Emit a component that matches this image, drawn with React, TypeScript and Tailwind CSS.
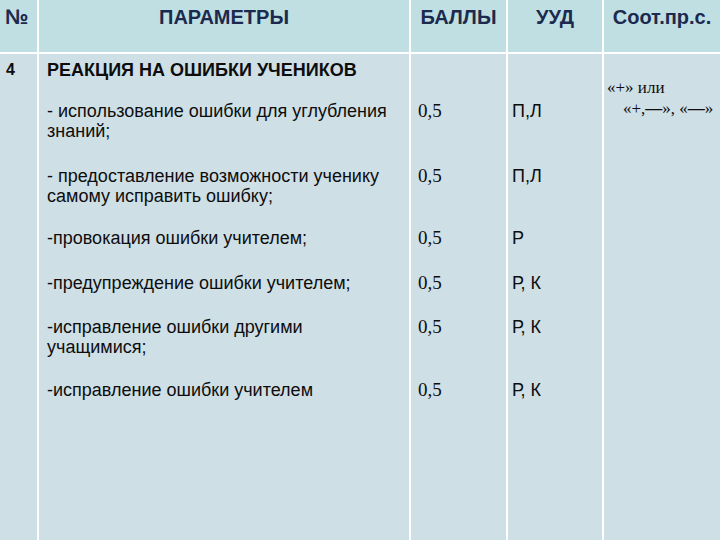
const rows = [
  { text: ["- использование ошибки для углубления", "знаний;"], score: "0,5", uud: "П,Л" },
  { text: ["- предоставление возможности ученику", "самому исправить ошибку;"], score: "0,5", uud: "П,Л" },
  { text: ["-провокация ошибки учителем;"], score: "0,5", uud: "Р" },
  { text: ["-предупреждение ошибки учителем;"], score: "0,5", uud: "Р, К" },
  { text: ["-исправление ошибки другими", "учащимися;"], score: "0,5", uud: "Р, К" },
  { text: ["-исправление ошибки учителем"], score: "0,5", uud: "Р, К" },
];

const rowStarts = ["row-start-2", "row-start-3", "row-start-4", "row-start-5", "row-start-6", "row-start-7"];

export default function App() {
  return (
    <div className="w-[720px] h-[540px] bg-white flex flex-col gap-[2px] overflow-hidden font-['Liberation_Sans',Arial,sans-serif]">
      {/* header */}
      <div className="grid grid-cols-[37px_370px_95px_94px_116px] gap-x-[2px] h-[52px] shrink-0 text-[20px] leading-[22px] font-bold text-[#1b2a4e]">
        <div className="bg-[#bfdfe3] pt-[6px] pl-[5px] text-[21px]">№</div>
        <div className="bg-[#bfdfe3] pt-[6px] text-center">ПАРАМЕТРЫ</div>
        <div className="bg-[#bfdfe3] pt-[6px] text-center">БАЛЛЫ</div>
        <div className="bg-[#bfdfe3] pt-[6px] text-center">УУД</div>
        <div className="bg-[#bfdfe3] pt-[6px] text-center">Соот.пр.с.</div>
      </div>

      {/* body */}
      <div className="flex-1 grid grid-cols-[37px_370px_95px_94px_116px] grid-rows-[47px_65px_62px_45px_44px_63px_1fr] gap-x-[2px] text-[#0d0d0d]">
        <div className="col-start-1 row-start-1 row-span-7 bg-[#cfdfe6] pt-[6px] pl-[6px] text-[16px] leading-[20px] font-bold">4</div>
        <div className="col-start-2 row-start-1 bg-[#cfdfe6] pt-[6px] pl-[8px] text-[18px] leading-[20px] font-bold whitespace-nowrap">
          РЕАКЦИЯ НА ОШИБКИ УЧЕНИКОВ
        </div>
        <div className="col-start-3 row-start-1 bg-[#cfdfe6]" />
        <div className="col-start-4 row-start-1 bg-[#cfdfe6]" />
        <div className="col-start-5 row-start-1 row-span-7 bg-[#cfdfe6] pt-[23px] font-['Liberation_Serif','Times_New_Roman',serif] text-[17px] leading-[21px] whitespace-nowrap">
          <div className="pl-[3px]">«+» или</div>
          <div className="pl-[19px]">«+,<b>—</b>», «<b>—</b>»</div>
        </div>

        {rows.map((r, i) => (
          <>
            <div key={`t${i}`} className={`col-start-2 ${rowStarts[i]} ${i === 5 ? "row-span-2" : ""} bg-[#cfdfe6] pl-[8px] text-[18px] leading-[20px] whitespace-nowrap`}>
              {r.text.map((t) => (
                <div key={t}>{t}</div>
              ))}
            </div>
            <div key={`s${i}`} className={`col-start-3 ${rowStarts[i]} ${i === 5 ? "row-span-2" : ""} bg-[#cfdfe6] pl-[7px] font-['Liberation_Serif','Times_New_Roman',serif] text-[19px] leading-[20px]`}>
              {r.score}
            </div>
            <div key={`u${i}`} className={`col-start-4 ${rowStarts[i]} ${i === 5 ? "row-span-2" : ""} bg-[#cfdfe6] pl-[4px] text-[18px] leading-[20px]`}>
              {r.uud}
            </div>
          </>
        ))}
      </div>
    </div>
  );
}
